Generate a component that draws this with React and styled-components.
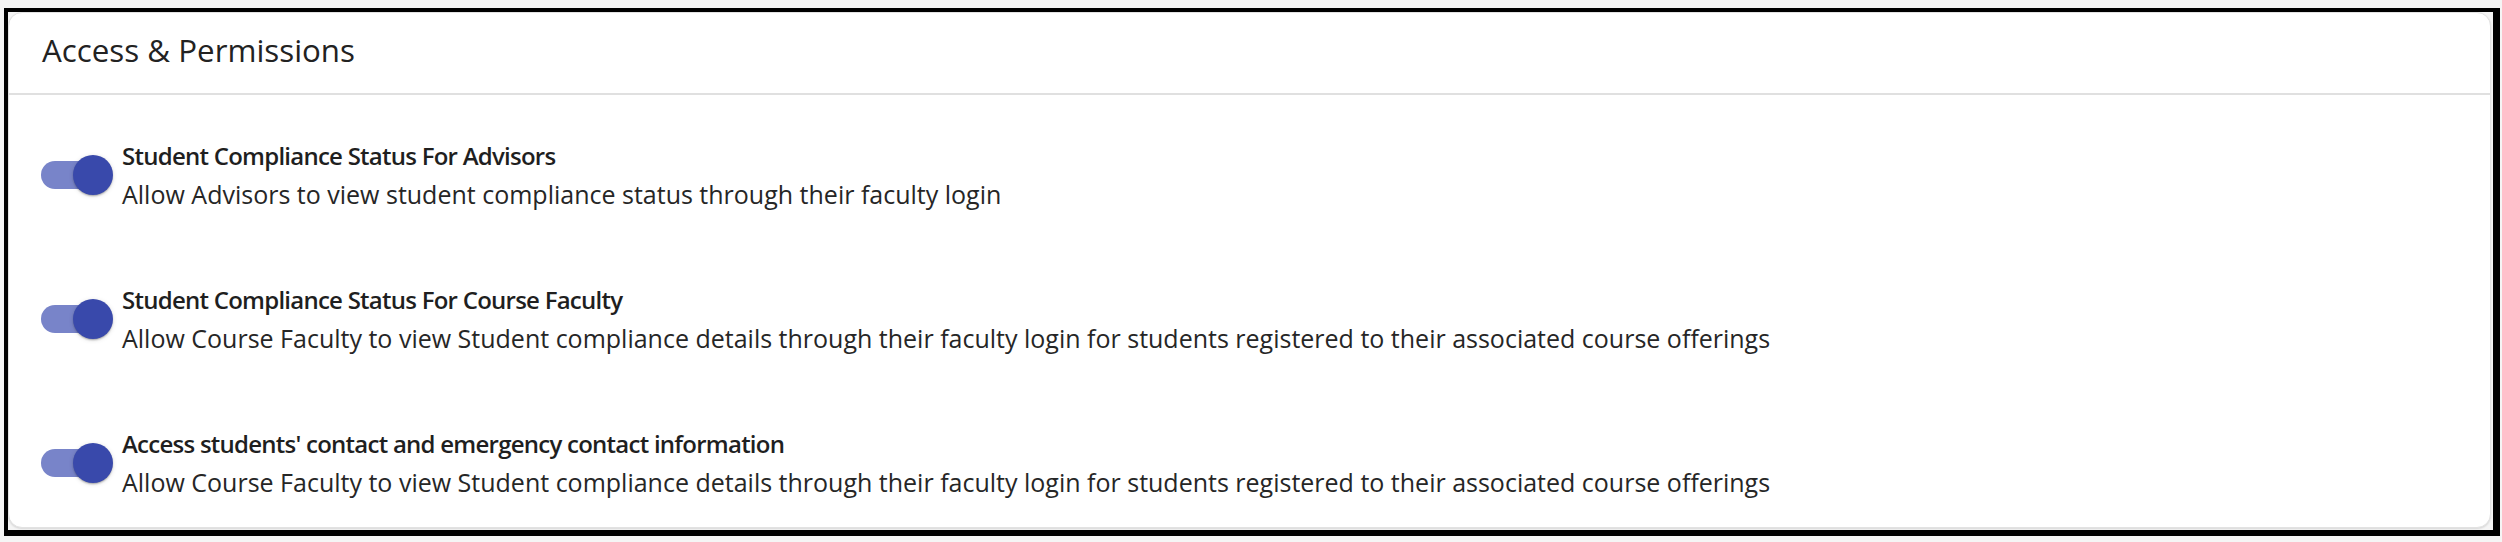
import React from "react";
import styled, { createGlobalStyle } from "styled-components";

const GlobalStyle = createGlobalStyle`
  html, body {
    margin: 0;
    padding: 0;
    background: #f5f5f5;
  }
  body {
    font-family: "Open Sans", "Noto Sans", sans-serif;
    color: #212121;
  }
`;

const permissions = [
  {
    title: "Student Compliance Status For Advisors",
    description: "Allow Advisors to view student compliance status through their faculty login",
  },
  {
    title: "Student Compliance Status For Course Faculty",
    description:
      "Allow Course Faculty to view Student compliance details through their faculty login for students registered to their associated course offerings",
  },
  {
    title: "Access students' contact and emergency contact information",
    description:
      "Allow Course Faculty to view Student compliance details through their faculty login for students registered to their associated course offerings",
  },
];

const Frame = styled.div`
  box-sizing: border-box;
  margin: 8px 0 0 4px;
  width: 2496px;
  height: 528px;
  border: solid #000;
  border-width: 4px 7px 6px 4px;
`;

const Card = styled.section`
  box-sizing: border-box;
  width: 2483px;
  height: 516px;
  background: #fff;
  border: 1px solid #e2e2e2;
  border-radius: 14px;
  box-shadow: 0 1px 2px rgba(0, 0, 0, 0.12);
  display: flex;
  flex-direction: column;
`;

const Header = styled.header`
  padding: 16px 33px 0;
  height: 82px;
  box-sizing: border-box;
  border-bottom: 2px solid #e0e0e0;
`;

const Heading = styled.h2`
  margin: 0;
  font-size: 31.3px;
  font-weight: 400;
  line-height: 42px;
  color: #222;
`;

const List = styled.div`
  display: flex;
  flex-direction: column;
  gap: 66px;
  padding: 41px 32px 0;
`;

const Row = styled.div`
  display: flex;
  align-items: center;
`;

const Switch = styled.span`
  position: relative;
  flex: none;
  width: 72px;
  height: 40px;
`;

const Track = styled.span`
  position: absolute;
  left: 0;
  top: 6px;
  width: 68px;
  height: 28px;
  border-radius: 14px;
  background: ${(p) => (p.$on ? "#7884c9" : "#bdbdbd")};
`;

const Thumb = styled.span`
  position: absolute;
  top: 0;
  ${(p) => (p.$on ? "right: 0;" : "left: 0;")}
  width: 40px;
  height: 40px;
  border-radius: 50%;
  background: ${(p) => (p.$on ? "#3949ab" : "#fafafa")};
  box-shadow: 0 2px 2px -1px rgba(0, 0, 0, 0.2), 0 1px 2px 0 rgba(0, 0, 0, 0.14), 0 1px 5px 0 rgba(0, 0, 0, 0.12);
`;

const Text = styled.div`
  margin-left: 9px;
  line-height: 39px;
`;

const Title = styled.div`
  font-size: 24px;
  font-weight: 600;
  letter-spacing: -0.75px;
  color: #1f1f1f;
`;

const Description = styled.div`
  font-size: 25px;
  color: #262626;
`;

function Toggle({ on }) {
  return (
    <Switch role="switch" aria-checked={on}>
      <Track $on={on} />
      <Thumb $on={on} />
    </Switch>
  );
}

export default function App() {
  return (
    <>
      <GlobalStyle />
      <Frame>
        <Card>
          <Header>
            <Heading>Access &amp; Permissions</Heading>
          </Header>
          <List>
            {permissions.map((item, index) => (
              <Row key={index}>
                <Toggle on />
                <Text>
                  <Title>{item.title}</Title>
                  <Description>{item.description}</Description>
                </Text>
              </Row>
            ))}
          </List>
        </Card>
      </Frame>
    </>
  );
}
